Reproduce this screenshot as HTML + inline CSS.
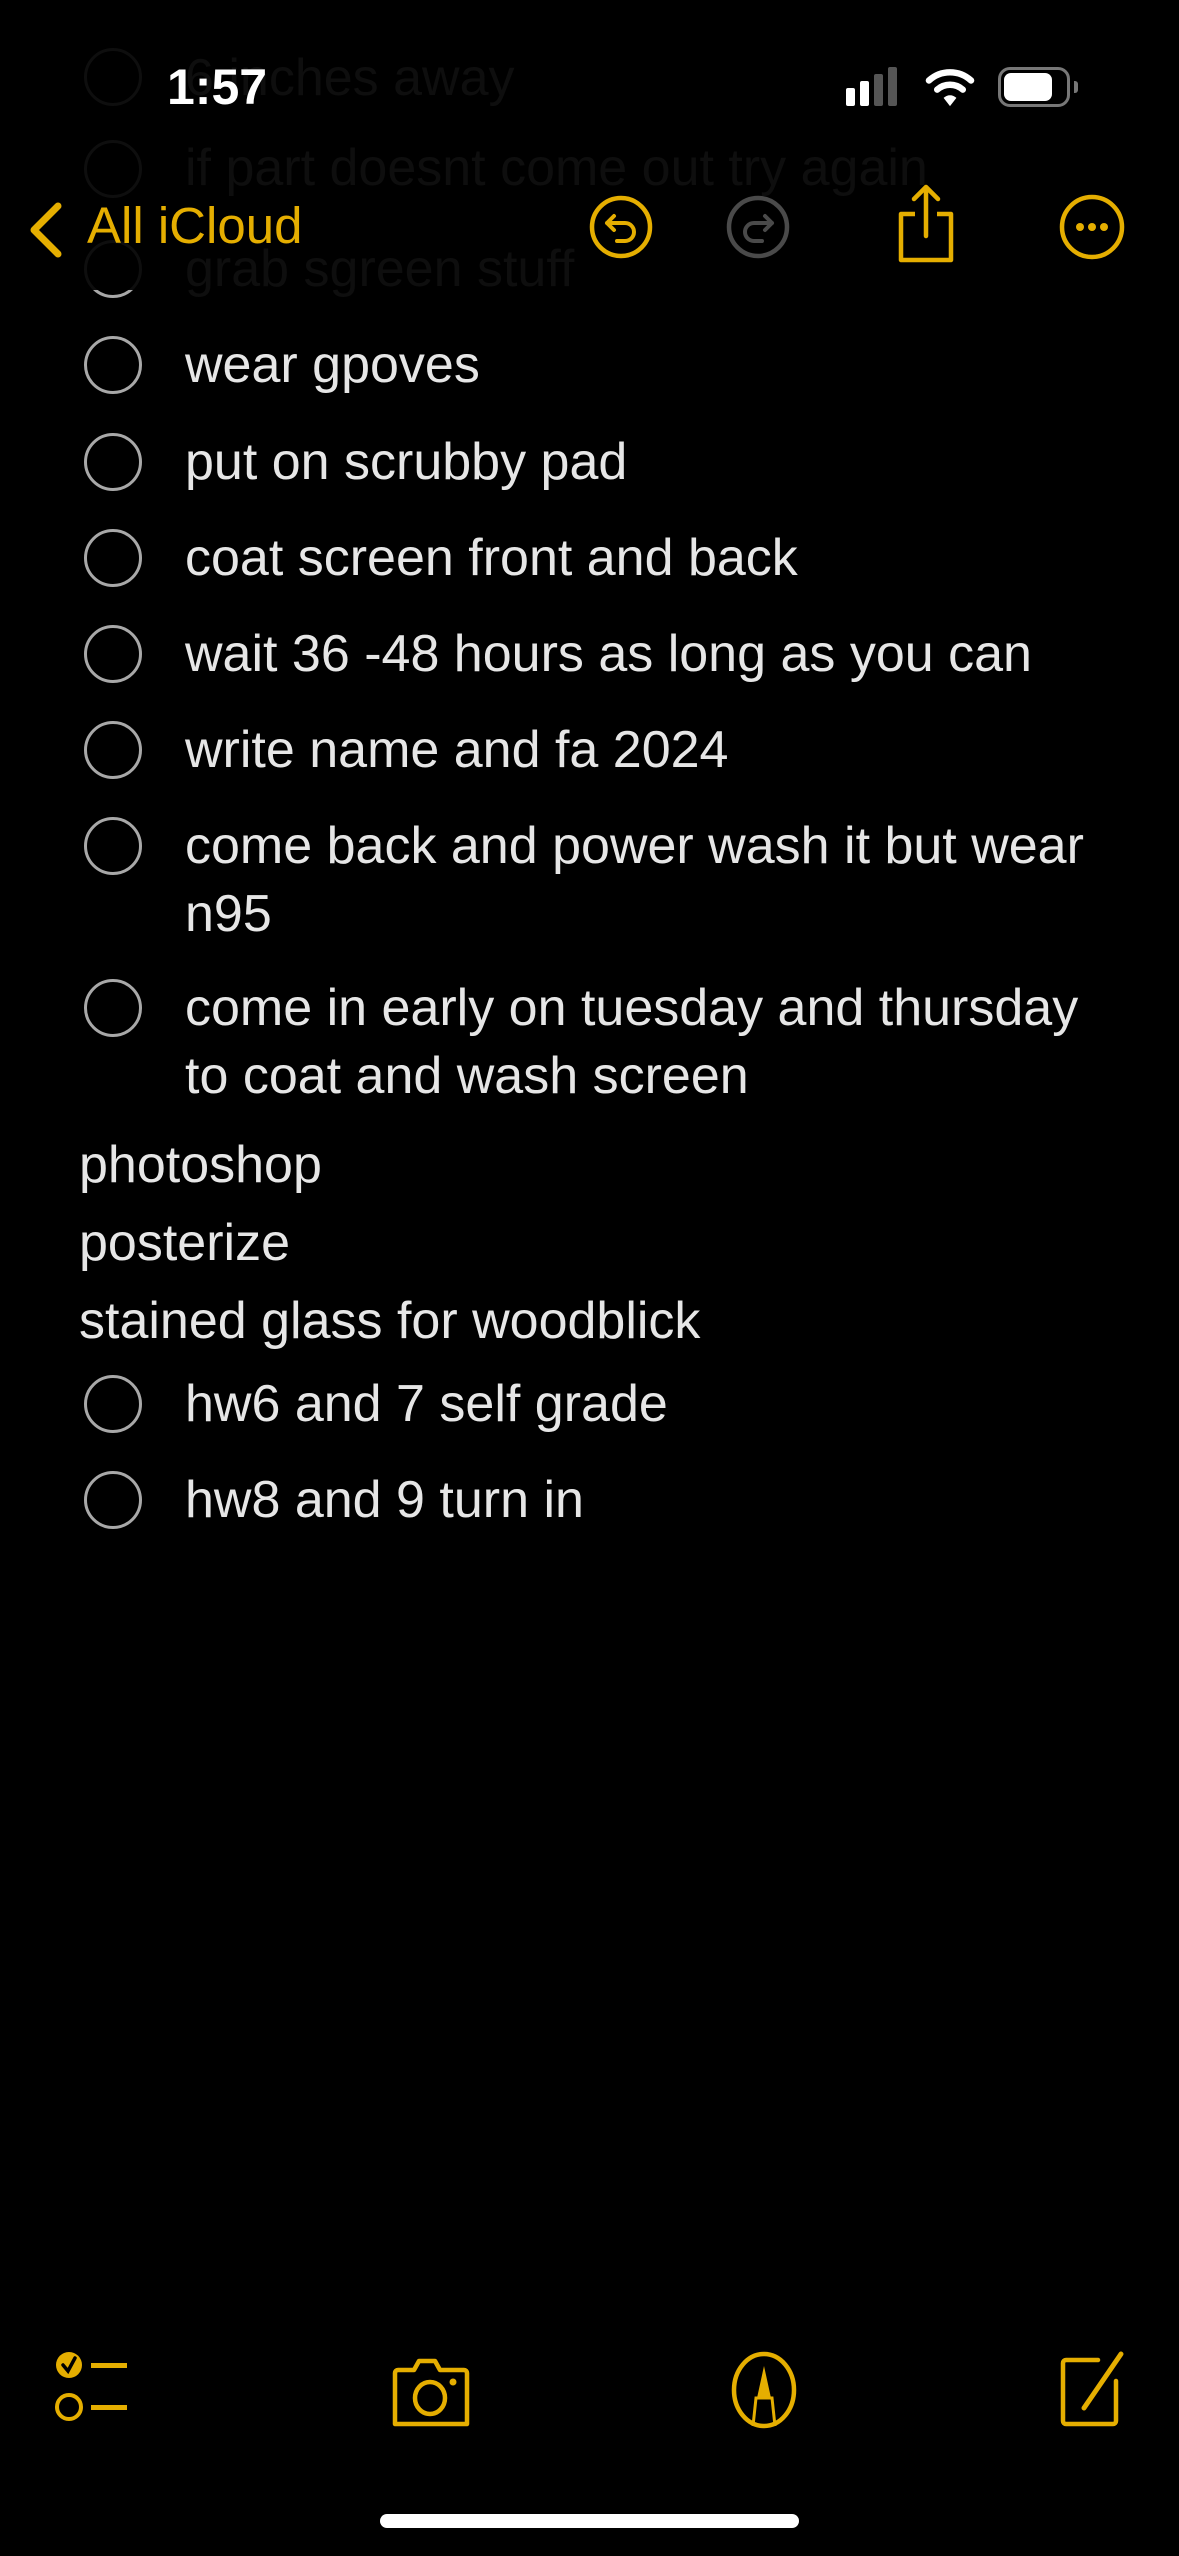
<!DOCTYPE html>
<html><head><meta charset="utf-8"><style>
html,body{margin:0;padding:0;background:#000;}
body{width:1179px;height:2556px;position:relative;overflow:hidden;font-family:"Liberation Sans",sans-serif;color:#e6e6e6;}
.a{position:absolute;white-space:nowrap;}
.t{position:absolute;left:185px;font-size:52px;line-height:68px;}
.p{position:absolute;left:79px;font-size:52px;line-height:68px;}
.c{position:absolute;left:84px;width:58px;height:58px;border:3px solid #a8a8a8;border-radius:50%;box-sizing:border-box;}
.g{position:absolute;left:185px;font-size:52px;color:#0e0e0e;line-height:68px;}
.gc{position:absolute;left:84px;width:58px;height:58px;border:3px solid #0e0e0e;border-radius:50%;box-sizing:border-box;}
</style></head><body>
<div class="gc" style="top:48px"></div><div class="g" style="top:44px">6 inches away</div>
<div class="gc" style="top:140px"></div><div class="g" style="top:134px">if part doesnt come out try again</div>
<div class="gc" style="top:240px"></div><div class="g" style="top:235px">grab sgreen stuff</div>
<div style="position:absolute;left:84px;top:240px;width:58px;height:58px;border:3px solid #a8a8a8;border-radius:50%;box-sizing:border-box;clip-path:inset(50px 0 0 0)"></div>

<div class="a" style="left:167px;top:58px;font-size:50px;font-weight:bold;color:#fff">1:57</div>
<div class="a" style="left:846px;top:88px;width:9px;height:18px;background:#fff;border-radius:2px"></div>
<div class="a" style="left:860px;top:81px;width:9px;height:25px;background:#fff;border-radius:2px"></div>
<div class="a" style="left:874px;top:74px;width:9px;height:32px;background:#555;border-radius:2px"></div>
<div class="a" style="left:888px;top:67px;width:9px;height:39px;background:#555;border-radius:2px"></div>
<svg class="a" style="left:925px;top:64px" width="50" height="44" viewBox="0 0 54 48"><path d="M4 18 A34 34 0 0 1 50 18" stroke="#fff" stroke-width="7" fill="none" stroke-linecap="round"/><path d="M13 28 A21 21 0 0 1 41 28" stroke="#fff" stroke-width="7" fill="none" stroke-linecap="round"/><path d="M20 37 L27 46 L34 37 A10 10 0 0 0 20 37Z" fill="#fff"/></svg>
<div class="a" style="left:998px;top:67px;width:72px;height:40px;border:3px solid #777;border-radius:12px;box-sizing:border-box"></div>
<div class="a" style="left:1004px;top:73px;width:48px;height:28px;background:#fff;border-radius:7px"></div>
<div class="a" style="left:1074px;top:81px;width:4px;height:12px;background:#777;border-radius:0 3px 3px 0"></div>

<svg class="a" style="left:26px;top:200px" width="40" height="60" viewBox="0 0 40 60"><path d="M32 6 L8 30 L32 54" stroke="#e5ae00" stroke-width="7" fill="none" stroke-linecap="round" stroke-linejoin="round"/></svg>
<div class="a" style="left:87px;top:196px;font-size:51px;color:#e5ae00">All iCloud</div>
<svg class="a" style="left:588px;top:194px" width="66" height="66" viewBox="0 0 66 66"><circle cx="33" cy="33" r="29" stroke="#e5ae00" stroke-width="4.5" fill="none"/><path d="M26 22 L19 29 L26 36 M19 29 H37 A9 9 0 0 1 37 47 H29" stroke="#e5ae00" stroke-width="4" fill="none" stroke-linecap="round" stroke-linejoin="round"/></svg>
<svg class="a" style="left:725px;top:194px" width="66" height="66" viewBox="0 0 66 66"><circle cx="33" cy="33" r="29" stroke="#4a4a4a" stroke-width="4.5" fill="none"/><path d="M40 22 L47 29 L40 36 M47 29 H29 A9 9 0 0 0 29 47 H37" stroke="#4a4a4a" stroke-width="4" fill="none" stroke-linecap="round" stroke-linejoin="round"/></svg>
<svg class="a" style="left:895px;top:184px" width="62" height="80" viewBox="0 0 62 80"><path d="M20 30 H6 V76 H56 V30 H42" stroke="#e5ae00" stroke-width="4.5" fill="none" stroke-linejoin="round"/><path d="M31 52 V4 M19 15 L31 3 L43 15" stroke="#e5ae00" stroke-width="4.5" fill="none" stroke-linecap="round" stroke-linejoin="round"/></svg>
<svg class="a" style="left:1058px;top:193px" width="68" height="68" viewBox="0 0 68 68"><circle cx="34" cy="34" r="30" stroke="#e5ae00" stroke-width="4.5" fill="none"/><circle cx="22" cy="34" r="4" fill="#e5ae00"/><circle cx="34" cy="34" r="4" fill="#e5ae00"/><circle cx="46" cy="34" r="4" fill="#e5ae00"/></svg>

<div class="c" style="top:336px"></div><div class="t" style="top:331px">wear gpoves</div>
<div class="c" style="top:433px"></div><div class="t" style="top:428px">put on scrubby pad</div>
<div class="c" style="top:529px"></div><div class="t" style="top:524px">coat screen front and back</div>
<div class="c" style="top:625px"></div><div class="t" style="top:620px">wait 36 -48 hours as long as you can</div>
<div class="c" style="top:721px"></div><div class="t" style="top:716px">write name and fa 2024</div>
<div class="c" style="top:817px"></div><div class="t" style="top:812px">come back and power wash it but wear<br>n95</div>
<div class="c" style="top:979px"></div><div class="t" style="top:974px">come in early on tuesday and thursday<br>to coat and wash screen</div>
<div class="p" style="top:1131px">photoshop</div>
<div class="p" style="top:1209px">posterize</div>
<div class="p" style="top:1287px">stained glass for woodblick</div>
<div class="c" style="top:1375px"></div><div class="t" style="top:1370px">hw6 and 7 self grade</div>
<div class="c" style="top:1471px"></div><div class="t" style="top:1466px">hw8 and 9 turn in</div>

<svg class="a" style="left:52px;top:2348px" width="80" height="80" viewBox="0 0 80 80"><circle cx="17" cy="17" r="13" fill="#e5ae00"/><path d="M11 17 L16 23 L23 10" stroke="#000" stroke-width="3.5" fill="none" stroke-linecap="round"/><circle cx="17" cy="59" r="12" stroke="#e5ae00" stroke-width="4" fill="none"/><rect x="39" y="15" width="36" height="5" fill="#e5ae00"/><rect x="39" y="57" width="36" height="5" fill="#e5ae00"/></svg>
<svg class="a" style="left:390px;top:2350px" width="82" height="80" viewBox="0 0 82 80"><path d="M8 20 H24 L29 11 H45 L50 20 H74 A3 3 0 0 1 77 23 V74 H5 V23 A3 3 0 0 1 8 20Z" stroke="#e5ae00" stroke-width="4.5" fill="none" stroke-linejoin="round"/><ellipse cx="40" cy="48" rx="15" ry="16" stroke="#e5ae00" stroke-width="4.5" fill="none"/><circle cx="63" cy="32" r="3.5" fill="#e5ae00"/></svg>
<svg class="a" style="left:730px;top:2350px" width="68" height="80" viewBox="0 0 68 80"><ellipse cx="34" cy="40" rx="30" ry="36" stroke="#e5ae00" stroke-width="4.5" fill="none"/><path d="M27 48 L34 16 L41 48Z" fill="#e5ae00"/><path d="M23 76 L26 48 H42 L45 76" stroke="#e5ae00" stroke-width="3" fill="none"/></svg>
<svg class="a" style="left:1058px;top:2346px" width="70" height="82" viewBox="0 0 70 82"><path d="M40 14 H8 A3 3 0 0 0 5 17 V75 A3 3 0 0 0 8 78 H55 A3 3 0 0 0 58 75 V35" stroke="#e5ae00" stroke-width="4.5" fill="none" stroke-linecap="round"/><path d="M63 8 L26 62" stroke="#e5ae00" stroke-width="5" stroke-linecap="round"/></svg>
<div class="a" style="left:380px;top:2514px;width:419px;height:14px;background:#fff;border-radius:7px"></div>
</body></html>
